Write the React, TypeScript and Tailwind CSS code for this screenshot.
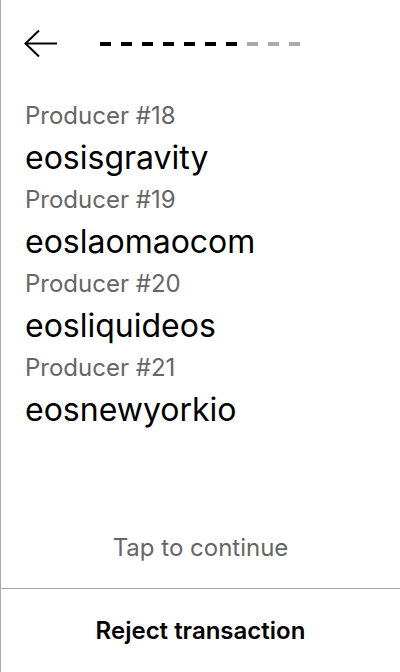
const producers = [
  { rank: 18, name: "eosisgravity" },
  { rank: 19, name: "eoslaomaocom" },
  { rank: 20, name: "eosliquideos" },
  { rank: 21, name: "eosnewyorkio" },
];

const steps = 10;
const done = 7;

export default function App() {
  return (
    <div
      className="w-[400px] h-[672px] bg-white border-l border-[#aaaaaa] flex flex-col text-black"
      style={{ fontFamily: "Inter, 'Noto Sans', sans-serif" }}
    >
      {/* header */}
      <div className="flex items-center h-[86px] pl-[23px] pt-[1px]">
        <svg width="34" height="30" viewBox="0 0 34 30" fill="none" stroke="black" strokeWidth={2}>
          <path d="M33 14.5H2" />
          <path d="M15 1.5L1.5 14.5L15 27.5" />
        </svg>
        <div className="flex gap-[10px] ml-[42px]">
          {Array.from({ length: steps }).map((_, i) => (
            <div
              key={i}
              className={`w-[11px] h-[4px] ${i < done ? "bg-black" : "bg-[#aaaaaa]"}`}
            />
          ))}
        </div>
      </div>

      {/* producers */}
      <div className="flex flex-col pl-[24px] pt-[12px]">
        {producers.map((p) => (
          <div key={p.rank} className="flex flex-col h-[84px]">
            <p className="text-[24px] leading-[36px] text-[#666666]">Producer #{p.rank}</p>
            <p className="text-[32px] leading-[48px]">{p.name}</p>
          </div>
        ))}
      </div>

      <div className="flex-1" />

      <p className="text-center text-[24px] leading-[36px] text-[#666666] mb-[22px]">Tap to continue</p>

      <div className="border-t border-[#aaaaaa] h-[84px] flex items-center justify-center">
        <span className="text-[24px] font-semibold">Reject transaction</span>
      </div>
    </div>
  );
}
